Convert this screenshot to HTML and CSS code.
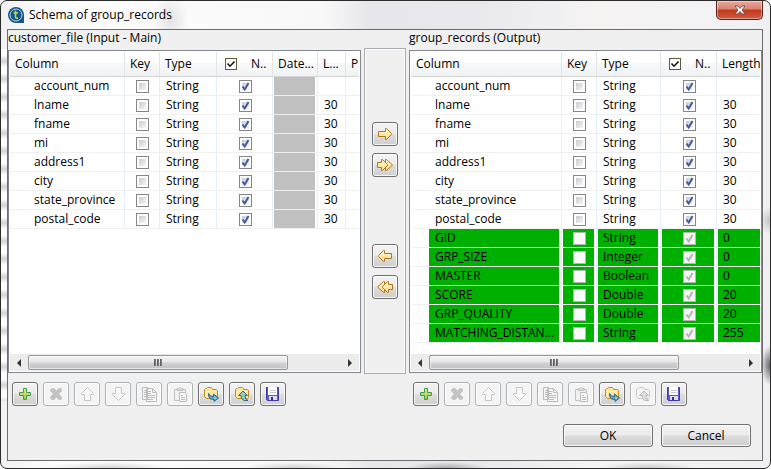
FILE: index.html
```
<!DOCTYPE html>
<html lang="en">
<head>
    <meta charset="UTF-8">
    <meta name="viewport" content="width=device-width, initial-scale=1.0">
    <title>Schema of group_records</title>
    <link rel="stylesheet" href="styles.css">
</head>
<body>
    <!-- Shared icons -->
    <svg class="sprite" aria-hidden="true">
        <defs>
            <linearGradient id="gold" x1="0" y1="0" x2="0" y2="1">
                <stop offset="0" stop-color="#fffbe0"/>
                <stop offset="1" stop-color="#fbd97c"/>
            </linearGradient>
            <linearGradient id="green" x1="0" y1="0" x2="0" y2="1">
                <stop offset="0" stop-color="#f0ec7a"/>
                <stop offset="1" stop-color="#8fcb4a"/>
            </linearGradient>
        </defs>
        <symbol id="i-add" viewBox="0 0 16 16">
            <path d="M6.500 2.500h3v4h4v3h-4v4h-3v-4h-4v-3h4z" fill="url(#green)" stroke="#3f9a55"/>
        </symbol>
        <symbol id="i-remove" viewBox="0 0 16 16">
            <path d="M2 4l2-2h2l2.500 2.500L11 2h2l1 2v1l-3 3 3 3v2l-2 1h-1l-2.500-2.500L6 14H4l-2-2v-1l3-3-3-3z" fill="#c3c3c3"/>
        </symbol>
        <symbol id="i-up" viewBox="0 0 16 16">
            <path d="M8.500 1.500l6 6v1h-3v6h-6v-6h-3v-1z" fill="#f8f8f8" stroke="#c6c6c6"/>
        </symbol>
        <symbol id="i-down" viewBox="0 0 16 16">
            <path d="M8.500 14.500l6-6v-1h-3v-6h-6v6h-3v1z" fill="#f8f8f8" stroke="#c6c6c6"/>
        </symbol>
        <symbol id="i-copy" viewBox="0 0 16 16">
            <path d="M1.500 1.500h5v12h-5zM5.500 2.500h6l4 4v9h-10z" fill="#f6f6f6" stroke="#bcbcbc"/>
            <path d="M11.500 2.500v4h4M3 4.500h2M3 6.500h2M3 8.500h2M3 10.500h2M7 5.500h3M7 7.500h3M7 9.500h7M7 11.500h7M7 13.500h5" fill="none" stroke="#bcbcbc"/>
        </symbol>
        <symbol id="i-paste" viewBox="0 0 16 16">
            <path d="M2.500 3.500h11v11h-11z" fill="#f0f0f0" stroke="#c2c2c2"/>
            <path d="M5 4.500V2.500h2l1-1 1 1h2v2z" fill="#ddd" stroke="#c2c2c2"/>
            <path d="M7.500 6.500h5l2 2v7h-7z" fill="#f8f8f8" stroke="#bcbcbc"/>
            <path d="M9 9.500h2M9 11.500h4M9 13.500h4" stroke="#bcbcbc"/>
        </symbol>
        <symbol id="i-import" viewBox="0 0 16 16">
            <path d="M1.500 3.500l1-1h1l1-1h4l1 1v1h4l1 1v7l-1 1h-10l-2-2z" fill="#fbe3a0" stroke="#c68a22"/>
            <path d="M3.500 5v5.500M4 5.500h9" stroke="#fff6cf" fill="none"/>
            <path d="M5.500 7.500l2 2.500 3 .5V8l5 4-4.500 3.500V13.500l-3.500-.5-2-3z" fill="#63a9c4" stroke="#235f90" stroke-width=".9"/>
            <path d="M11.500 10.500l2 1.500-2 1.500z" fill="#a8dcc8"/>
        </symbol>
        <symbol id="i-export" viewBox="0 0 16 16">
            <path d="M1.500 3.500l1-1h1l1-1h4l1 1v1h4l1 1v7l-1 1h-10l-2-2z" fill="#fbe3a0" stroke="#c68a22"/>
            <path d="M3.500 5v5.500M4 5.500h9" stroke="#fff6cf" fill="none"/>
            <path d="M9 5l4.500 4.500H11l.5 3 2.500 2h-4L7.500 12.500l-.5-3H4.500z" fill="#8ccdb9" stroke="#235f90" stroke-width=".9"/>
        </symbol>
        <symbol id="i-export-off" viewBox="0 0 16 16">
            <path d="M1.500 3.500l1-1h1l1-1h4l1 1v1h4l1 1v7l-1 1h-10l-2-2z" fill="#f3f3f3" stroke="#cacaca"/>
            <path d="M9 5l4.500 4.500H11l.5 3 2.500 2h-4L7.500 12.500l-.5-3H4.500z" fill="#ddd" stroke="#bdbdbd"/>
        </symbol>
        <symbol id="i-save" viewBox="0 0 16 16">
            <path d="M1.500 1.500h12v13h-11l-1-1z" fill="#5a58cf" stroke="#3c39a8"/>
            <path d="M3 1h9v8H3z" fill="#fff"/>
            <path d="M5 4.500h6M5 6.500h6" stroke="#c9c9d6"/>
            <path d="M4 10h8v4H4z" fill="#d9dbe8"/>
            <path d="M6 11h2v3H6z" fill="#2f2c94"/>
        </symbol>
        <symbol id="i-right" viewBox="0 0 16 16">
            <path d="M1.500 5.500h7v-3h1l5 5v1l-5 5h-1v-3h-7z" fill="url(#gold)" stroke="#b0761c"/>
        </symbol>
        <symbol id="i-left" viewBox="0 0 16 16">
            <path d="M14.500 5.500h-7v-3h-1l-5 5v1l5 5h1v-3h7z" fill="url(#gold)" stroke="#b0761c"/>
        </symbol>
        <symbol id="i-right-all" viewBox="0 0 16 16">
            <path d="M9.500 2.500l6 5.500-6 5.500h-1v-11z" fill="url(#gold)" stroke="#b0761c"/>
            <path d="M.5 5.500h4v-3h1l5 5v1l-5 5h-1v-3h-4z" fill="url(#gold)" stroke="#b0761c"/>
        </symbol>
        <symbol id="i-left-all" viewBox="0 0 16 16">
            <path d="M6.500 2.500L.5 8l6 5.500h1v-11z" fill="url(#gold)" stroke="#b0761c"/>
            <path d="M15.500 5.500h-4v-3h-1l-5 5v1l5 5h1v-3h4z" fill="url(#gold)" stroke="#b0761c"/>
        </symbol>
    </svg>

    <div class="window">
        <header class="titlebar">
            <svg class="logo" viewBox="0 0 16 16" aria-hidden="true">
                <path d="M8 0a8 8 0 1 0 0 16h8V8a8 8 0 0 0-8-8z" fill="#15578c"/>
                <circle cx="8" cy="8" r="6" fill="none" stroke="#b4d3e6"/>
                <path d="M7.500 3.500v6.500q0 1.500 2.500 1.200M5.500 6h4.500" fill="none" stroke="#c2d840" stroke-width="1.600"/>
            </svg>
            <h1>Schema of group_records</h1>
            <button class="close" type="button" aria-label="Close">
                <svg viewBox="0 0 12 10"><path d="M1 1h3l2 2.500L8 1h3L8 5l3 4H8L6 6.500 4 9H1l3-4z" fill="#fff" stroke="#5e3a3a" stroke-width=".8"/></svg>
            </button>
        </header>

        <main class="content">
            <div class="schemas">
                <section class="schema">
                    <h2>customer_file (Input - Main)</h2>
                    <div class="grid-box">
                        <table class="grid">
                            <colgroup>
                                <col class="w-name-in"><col class="w-key"><col class="w-type-in"><col class="w-null"><col class="w-date"><col class="w-len"><col>
                            </colgroup>
                            <thead>
                                <tr><th>Column</th><th>Key</th><th>Type</th><th><label class="null-head"><input class="check-all" type="checkbox" checked>N..</label></th><th>Date...</th><th>L...</th><th>P</th></tr>
                            </thead>
                            <tbody id="inputRows"></tbody>
                        </table>
                        <div class="scrollbar">
                            <span class="arrow-left"></span>
                            <div class="track"><div class="thumb thumb-in"><i></i></div></div>
                            <span class="arrow-right"></span>
                        </div>
                    </div>
                    <div class="toolbar">
                        <button type="button" aria-label="Add"><svg><use href="#i-add"/></svg></button>
                        <button type="button" aria-label="Remove" disabled><svg><use href="#i-remove"/></svg></button>
                        <button type="button" aria-label="Move up" disabled><svg><use href="#i-up"/></svg></button>
                        <button type="button" aria-label="Move down" disabled><svg><use href="#i-down"/></svg></button>
                        <button type="button" aria-label="Copy" disabled><svg><use href="#i-copy"/></svg></button>
                        <button type="button" aria-label="Paste" disabled><svg><use href="#i-paste"/></svg></button>
                        <button type="button" aria-label="Export"><svg><use href="#i-import"/></svg></button>
                        <button type="button" aria-label="Import"><svg><use href="#i-export"/></svg></button>
                        <button type="button" aria-label="Save"><svg><use href="#i-save"/></svg></button>
                    </div>
                </section>

                <div class="transfer">
                    <div class="transfer-group">
                        <button type="button" aria-label="Copy to output"><svg><use href="#i-right"/></svg></button>
                        <button type="button" aria-label="Copy all to output"><svg><use href="#i-right-all"/></svg></button>
                    </div>
                    <div class="transfer-group">
                        <button type="button" aria-label="Copy to input"><svg><use href="#i-left"/></svg></button>
                        <button type="button" aria-label="Copy all to input"><svg><use href="#i-left-all"/></svg></button>
                    </div>
                </div>

                <section class="schema">
                    <h2>group_records (Output)</h2>
                    <div class="grid-box">
                        <table class="grid">
                            <colgroup>
                                <col class="w-name-out"><col class="w-key"><col class="w-type-out"><col class="w-null"><col>
                            </colgroup>
                            <thead>
                                <tr><th>Column</th><th>Key</th><th>Type</th><th><label class="null-head"><input class="check-all" type="checkbox" checked>N..</label></th><th>Length</th></tr>
                            </thead>
                            <tbody id="outputRows"></tbody>
                        </table>
                        <div class="scrollbar">
                            <span class="arrow-left"></span>
                            <div class="track"><div class="thumb thumb-out"><i></i></div></div>
                            <span class="arrow-right"></span>
                        </div>
                    </div>
                    <div class="toolbar">
                        <button type="button" aria-label="Add"><svg><use href="#i-add"/></svg></button>
                        <button type="button" aria-label="Remove" disabled><svg><use href="#i-remove"/></svg></button>
                        <button type="button" aria-label="Move up" disabled><svg><use href="#i-up"/></svg></button>
                        <button type="button" aria-label="Move down" disabled><svg><use href="#i-down"/></svg></button>
                        <button type="button" aria-label="Copy" disabled><svg><use href="#i-copy"/></svg></button>
                        <button type="button" aria-label="Paste" disabled><svg><use href="#i-paste"/></svg></button>
                        <button type="button" aria-label="Export"><svg><use href="#i-import"/></svg></button>
                        <button type="button" aria-label="Import" disabled><svg><use href="#i-export-off"/></svg></button>
                        <button type="button" aria-label="Save"><svg><use href="#i-save"/></svg></button>
                    </div>
                </section>
            </div>

            <footer class="actions">
                <button type="button">OK</button>
                <button type="button">Cancel</button>
            </footer>
        </main>
    </div>

    <script src="script.js"></script>
</body>
</html>
```
FILE: styles.css
```
* {
    margin: 0;
    padding: 0;
    box-sizing: border-box;
}

body {
    font-family: 'Segoe UI', 'Open Sans', 'Noto Sans', sans-serif;
    font-size: 12px;
    line-height: 16px;
    color: #000;
    background: #fff;
}

button,
input {
    font: inherit;
    color: inherit;
}

.sprite {
    position: absolute;
    width: 0;
    height: 0;
}

.window {
    min-height: 100vh;
    display: flex;
    flex-direction: column;
    padding: 0 7px 7px 6px;
    border: 1px solid #2b2b2b;
    border-radius: 7px;
    background:
        radial-gradient(ellipse 9px 20px at 100% 78%, rgba(60, 64, 72, 0.8), transparent),
        radial-gradient(ellipse 10px 14px at 100% 47%, rgba(120, 124, 132, 0.4), transparent),
        radial-gradient(ellipse 60px 6px at 14% 100%, rgba(150, 150, 150, 0.4), transparent),
        radial-gradient(ellipse 50px 6px at 38% 100%, rgba(150, 150, 150, 0.4), transparent),
        radial-gradient(ellipse 40px 6px at 58% 100%, rgba(110, 110, 110, 0.5), transparent),
        radial-gradient(ellipse 50px 6px at 84% 100%, rgba(140, 140, 140, 0.4), transparent),
        radial-gradient(ellipse 18px 24px at 22% 18px, rgba(180, 180, 180, 0.35), transparent),
        repeating-linear-gradient(#fff 0, #fff 6px, rgba(190, 186, 188, 0.6) 12px, #fff 18px) 0 48px / 6px 352px no-repeat,
        linear-gradient(90deg, #f2f2f2 0%, #fdfdfd 8%, #f8f8f8 42%, #e6e6ec 48%, #e8e8ee 62%, #f6f4f3 78%, #f0f0f4 100%);
}

/* Title bar */
.titlebar {
    display: flex;
    align-items: center;
    gap: 5px;
    height: 28px;
}

.logo {
    width: 16px;
    height: 16px;
    margin-left: 1px;
}

.titlebar h1 {
    flex: 1;
    font-size: 12px;
    font-weight: 400;
}

.close {
    align-self: flex-start;
    display: flex;
    align-items: center;
    justify-content: center;
    width: 47px;
    height: 19px;
    border: 1px solid #5b2320;
    border-top: 0;
    border-radius: 0 0 5px 5px;
    background: linear-gradient(#e9a99c 0%, #d98170 45%, #c03a20 50%, #cf5b3e 100%);
    box-shadow: inset 0 0 0 1px rgba(255, 255, 255, 0.4);
}

.close svg {
    width: 12px;
    height: 10px;
}

/* Dialog body */
.content {
    flex: 1;
    display: flex;
    flex-direction: column;
    border: 1px solid #6c6c6c;
    background: #f0f0f0;
}

.schemas {
    display: grid;
    grid-template-columns: minmax(0, 1fr) 42px minmax(0, 1fr);
    gap: 3px;
    align-items: start;
}

.schema h2 {
    padding-bottom: 4px;
    font-size: 12px;
    font-weight: 400;
}

.grid-box {
    display: flex;
    flex-direction: column;
    min-height: 323px;
    border: 1px solid #828790;
    padding: 1px;
    background: #fff;
}

/* Tables */
.grid {
    width: 100%;
    table-layout: fixed;
    border-collapse: separate;
    border-spacing: 0;
}

.w-name-in { width: 115px; }
.w-name-out { width: 151px; }
.w-key { width: 35px; }
.w-type-in { width: 57px; }
.w-type-out { width: 64px; }
.w-null { width: 56px; }
.w-date { width: 45px; }
.w-len { width: 28px; }

.grid th,
.grid td {
    overflow: hidden;
    white-space: nowrap;
    text-align: left;
    font-weight: 400;
}

.grid th {
    height: 25px;
    padding-left: 5px;
    border-right: 1px solid #e2e4e8;
    border-bottom: 1px solid #d5d5d5;
    background: linear-gradient(#fff 0%, #fff 45%, #f7f8fa 46%, #f1f2f4 100%);
}

.grid td {
    height: 19px;
    padding: 0 2px 0 1px;
    border-right: 1px solid #e6eefa;
    border-bottom: 1px solid #f0f0f0;
}

.grid th:last-child,
.grid td:last-child {
    border-right: 0;
    padding-right: 0;
}

.grid td:first-child {
    padding-left: 18px;
}

.cell {
    display: block;
    height: 18px;
    padding-left: 5px;
    line-height: 18px;
    overflow: hidden;
    text-overflow: ellipsis;
}

.grid td:first-child .cell {
    padding-left: 6px;
}

.grid .check-cell {
    display: flex;
    align-items: center;
    justify-content: center;
    padding-left: 2px;
}

.added .cell {
    background: #00b000;
}

.filler {
    background: #c0c0c0;
}

.null-head {
    display: flex;
    align-items: center;
    gap: 14px;
    padding-left: 3px;
}

input[type="checkbox"] {
    appearance: none;
    flex: none;
    width: 13px;
    height: 13px;
    border: 1px solid #858686;
    background: linear-gradient(135deg, #c8cbd2, #f6f6f6) content-box #f4f4f4;
    padding: 2px;
}

input[type="checkbox"]:checked {
    background: url("data:image/svg+xml,%3Csvg xmlns='http://www.w3.org/2000/svg' viewBox='0 0 11 11'%3E%3Cpath d='M2.500 5.500l2.200 3L8.500 2' fill='none' stroke='%23405a9c' stroke-width='2'/%3E%3C/svg%3E"), linear-gradient(135deg, #c8cbd2, #f6f6f6) content-box #f4f4f4;
    background-origin: padding-box, content-box;
}

input[type="checkbox"]:disabled {
    border-color: #b5b5b5;
    background: #fafafa;
}

input[type="checkbox"]:disabled:checked {
    background: #f4f4f4 url("data:image/svg+xml,%3Csvg xmlns='http://www.w3.org/2000/svg' viewBox='0 0 11 11'%3E%3Cpath d='M2.500 5.500l2.200 3L8.500 2' fill='none' stroke='%23b4b4b4' stroke-width='2'/%3E%3C/svg%3E");
    background-origin: padding-box;
}

input.check-all:checked {
    width: 12px;
    height: 12px;
    border-color: #5c5c3c;
    background: #fff url("data:image/svg+xml,%3Csvg xmlns='http://www.w3.org/2000/svg' viewBox='0 0 10 10'%3E%3Cpath d='M1.500 4.500L4 7.200 8.500 2.500' fill='none' stroke='%23111' stroke-width='1.600'/%3E%3C/svg%3E");
    background-origin: padding-box;
}

/* Scrollbar */
.scrollbar {
    display: flex;
    align-items: center;
    height: 17px;
    margin-top: auto;
    background: #ececec;
}

.arrow-left,
.arrow-right {
    width: 18px;
    display: flex;
    justify-content: center;
}

.arrow-left::before,
.arrow-right::before {
    content: "";
    border: 4px solid transparent;
}

.arrow-left::before {
    border-left-width: 0;
    border-right-color: #333;
}

.arrow-right::before {
    border-right-width: 0;
    border-left-color: #333;
}

.track {
    flex: 1;
}

.thumb {
    display: flex;
    align-items: center;
    justify-content: center;
    height: 15px;
    border: 1px solid #979797;
    border-radius: 2px;
    background: linear-gradient(#f4f4f4 0%, #e6e6e8 48%, #d0d1d4 52%, #c2c3c7 100%);
    box-shadow: inset 0 0 0 1px rgba(255, 255, 255, 0.5);
}

.thumb-in { width: 83%; }
.thumb-out { width: 80%; }

.thumb i {
    width: 8px;
    height: 7px;
    background: repeating-linear-gradient(90deg, #555 0, #888 2px, transparent 2px, transparent 3px);
}

/* Buttons */
.toolbar {
    display: flex;
    gap: 5px;
    padding: 9px 4px 0;
}

.toolbar button,
.transfer button {
    display: flex;
    align-items: center;
    justify-content: center;
    width: 26px;
    height: 24px;
    border: 1px solid #707070;
    border-radius: 3px;
    background: linear-gradient(#f3f3f3 0%, #ebebeb 48%, #dddddd 52%, #cfcfcf 100%);
    box-shadow: inset 0 0 0 1px rgba(255, 255, 255, 0.8);
}

.toolbar button:disabled {
    border-color: #adb2b5;
    background: #f4f4f4;
}

.toolbar svg,
.transfer svg {
    width: 16px;
    height: 16px;
}

.transfer {
    display: flex;
    flex-direction: column;
    align-items: center;
    gap: 67px;
    height: 326px;
    margin-top: 18px;
    padding-top: 73px;
    border: 1px solid #a9abb0;
    box-shadow: inset 0 0 0 1px #fafafa;
}

.transfer-group {
    display: flex;
    flex-direction: column;
    gap: 7px;
}

.actions {
    display: flex;
    justify-content: flex-end;
    gap: 8px;
    margin-top: auto;
    padding: 18px 11px 13px;
}

.actions button {
    width: 90px;
    height: 23px;
    border: 1px solid #707070;
    border-radius: 3px;
    background: linear-gradient(#f3f3f3 0%, #ebebeb 48%, #dddddd 52%, #cfcfcf 100%);
    box-shadow: inset 0 0 0 1px rgba(255, 255, 255, 0.8);
}
```
FILE: script.js
```
const inputColumns = [
    { name: 'account_num', type: 'String', length: '' },
    { name: 'lname', type: 'String', length: '30' },
    { name: 'fname', type: 'String', length: '30' },
    { name: 'mi', type: 'String', length: '30' },
    { name: 'address1', type: 'String', length: '30' },
    { name: 'city', type: 'String', length: '30' },
    { name: 'state_province', type: 'String', length: '30' },
    { name: 'postal_code', type: 'String', length: '30' }
];

// Columns the component adds itself, read-only in the output
const addedColumns = [
    { name: 'GID', type: 'String', length: '0', added: true },
    { name: 'GRP_SIZE', type: 'Integer', length: '0', added: true },
    { name: 'MASTER', type: 'Boolean', length: '0', added: true },
    { name: 'SCORE', type: 'Double', length: '20', added: true },
    { name: 'GRP_QUALITY', type: 'Double', length: '20', added: true },
    { name: 'MATCHING_DISTAN...', type: 'String', length: '255', added: true }
];

function textCell(text) {
    return `<td><span class="cell">${text}</span></td>`;
}

function checkCell(label, checked, disabled) {
    return `<td><span class="cell check-cell"><input type="checkbox" aria-label="${label}"${checked ? ' checked' : ''}${disabled ? ' disabled' : ''}></span></td>`;
}

function renderRows(id, columns, isInput) {
    document.getElementById(id).innerHTML = columns.map(col => `
        <tr class="${col.added ? 'added' : ''}">
            ${textCell(col.name)}
            ${checkCell(col.name + ' key', false, col.added)}
            ${textCell(col.type)}
            ${checkCell(col.name + ' nullable', true, col.added)}
            ${isInput ? '<td><span class="cell filler"></span></td>' : ''}
            ${textCell(col.length)}
            ${isInput ? textCell('') : ''}
        </tr>`).join('');
}

renderRows('inputRows', inputColumns, true);
renderRows('outputRows', inputColumns.concat(addedColumns), false);
```
